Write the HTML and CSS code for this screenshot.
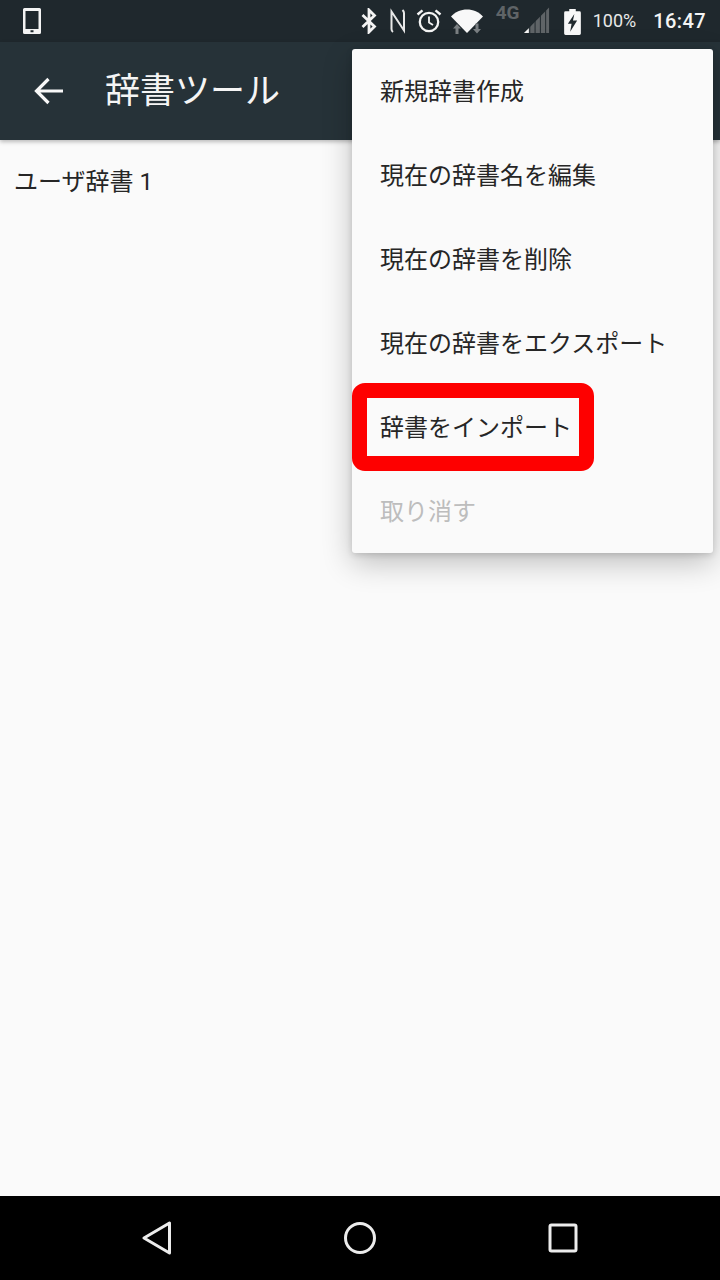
FILE: index.html
```html
<!DOCTYPE html>
<html lang="ja">
<head>
<meta charset="utf-8">
<title>辞書ツール</title>
<link rel="stylesheet" href="styles.css">
</head>
<body>
<div class="screen">
  <header class="status">
    <svg class="st-phone" width="20" height="28" viewBox="0 0 20 28"><path fill="#f4f4f4" fill-rule="evenodd" d="M2.500 1h15A1.500 1.500 0 0 1 19 2.500v23a1.500 1.500 0 0 1-1.500 1.500h-15A1.500 1.500 0 0 1 1 25.500v-23A1.500 1.500 0 0 1 2.500 1zM3.500 4v18h13V4zM8.500 23.200v2h3v-2z"/></svg>
    <div class="st-right">
      <svg class="st-bt" width="16" height="26" viewBox="0 0 16 26"><path fill="none" stroke="#f4f4f4" stroke-width="2.800" d="M1.500 7l12 11.500L8 24V2l5.500 5.500L1.500 19"/></svg>
      <svg class="st-n" width="16" height="26" viewBox="0 0 16 26"><path fill="none" stroke="#e8e8e8" stroke-width="2" d="M3 24c-1.500-1-1.500-2-1.500-3V3.500L14 22.500V5c0-1.500-.5-2-1.500-3"/></svg>
      <svg class="st-alarm" width="26" height="26" viewBox="0 0 26 26"><g fill="none" stroke="#f4f4f4"><circle cx="13" cy="14" r="9.200" stroke-width="2.300"/><path stroke-width="1.800" d="M13 8.500V14.500l4 2.500"/><path stroke-width="2.400" d="M1.500 6.500l5-4.200M24.500 6.500l-5-4.200"/></g></svg>
      <svg class="st-wifi" width="32" height="28" viewBox="0 0 32 28"><path fill="#f8f8f8" d="M0 9.500C4 5 10 2.500 16 2.500s12 2.500 16 7L16 26z"/><path fill="#7a7f82" d="M2 21.500l4-4.500 4 4.500H7.500V27h-3v-5.500zM22 22h2.500v-5.500h3V22H30l-4 4.500z"/></svg>
      <div class="st-net">
        <span class="st-4g">4G</span>
        <svg width="27" height="27" viewBox="0 0 27 27"><path fill="#5f6467" d="M26 0v26.500H0z"/><path fill="#f4f4f4" d="M5 21.500v5H0z"/><path fill="#1f282d" d="M5.500 19h1v8h-1zM11 13h1v14h-1zM16.500 7h1v20h-1zM22 1h1v26h-1z"/></svg>
      </div>
      <svg class="st-batt" width="17" height="26" viewBox="0 0 18 28"><path fill="#f8f8f8" fill-rule="evenodd" d="M5.500 0h7v2.500h4A1.500 1.500 0 0 1 18 4v22.500a1.500 1.500 0 0 1-1.500 1.500h-15A1.500 1.500 0 0 1 0 26.500V4a1.500 1.500 0 0 1 1.500-1.500h4zM11 5.500L4 16h4l-1.500 8.500L14 12.500H9.500z"/></svg>
      <span class="st-pct">100%</span>
      <span class="st-time">16:47</span>
    </div>
  </header>
  <div class="toolbar">
    <svg class="tb-back" width="30" height="28" viewBox="0 0 30 28"><path fill="none" stroke="#f8f8f8" stroke-width="3.200" d="M29 14H3M14.500 2L2.500 14l12 12"/></svg>
    <h1 class="tb-title">辞書ツール</h1>
  </div>
  <main class="content">
    <div class="dict-name">ユーザ辞書 1</div>
  </main>
  <nav class="navbar">
    <svg width="30" height="34" viewBox="0 0 30 34"><path fill="none" stroke="#ececec" stroke-width="3" stroke-linejoin="round" d="M27.500 2v30L2 17z"/></svg>
    <svg width="34" height="34" viewBox="0 0 34 34"><circle cx="17" cy="17" r="14.500" fill="none" stroke="#ececec" stroke-width="3"/></svg>
    <svg width="30" height="30" viewBox="0 0 30 30"><rect x="2" y="2" width="26" height="26" rx="1.500" fill="none" stroke="#ececec" stroke-width="3"/></svg>
  </nav>
  <ul class="menu">
    <li class="menu-item">新規辞書作成</li>
    <li class="menu-item">現在の辞書名を編集</li>
    <li class="menu-item">現在の辞書を削除</li>
    <li class="menu-item">現在の辞書をエクスポート</li>
    <li class="menu-item">辞書をインポート</li>
    <li class="menu-item is-disabled">取り消す</li>
  </ul>
  <div class="highlight"></div>
</div>
</body>
</html>
```
FILE: styles.css
```css
* { box-sizing: border-box; }
html, body { margin: 0; padding: 0; }
body { font-family: "Roboto", "Noto Sans CJK JP", sans-serif; background: #fafafa; }
.screen { position: relative; width: 720px; height: 1280px; display: flex; flex-direction: column; overflow: hidden; }
.status { height: 42px; flex: none; background: #1f282d; display: flex; align-items: center; justify-content: space-between; padding: 0 14px 0 22px; color: #f4f4f4; }
.st-right { display: flex; align-items: center; }
.st-bt { margin-right: 13px; }
.st-n { margin-right: 10px; }
.st-alarm { margin-right: 9px; }
.st-wifi { margin-right: 13px; }
.st-net { display: flex; align-items: flex-start; width: 54px; height: 42px; position: relative; margin-right: 14px; padding: 7px 0 0 28px; }
.st-4g { position: absolute; left: 0; top: 3px; font-size: 19px; line-height: 20px; font-weight: 700; color: #5f6467; }
.st-batt { margin-right: 12px; margin-top: 1px; }
.st-pct { font-size: 18px; line-height: 42px; margin-right: 17px; color: #e8e8e8; }
.st-time { font-size: 20px; line-height: 42px; font-weight: 500; letter-spacing: .4px; }
.toolbar { height: 98px; flex: none; background: #263238; display: flex; align-items: center; padding-left: 34px; box-shadow: 0 2px 4px rgba(0,0,0,.25); position: relative; z-index: 1; }
.tb-title { margin: 1px 0 0 41px; font-size: 35px; line-height: 44px; font-weight: 400; color: #f5f5f5; }
.content { flex: 1; background: #fafafa; padding: 24px 14px 0; }
.dict-name { font-size: 24px; line-height: 36px; color: #262626; }
.navbar { height: 84px; flex: none; background: #000; display: flex; align-items: center; padding: 0 142px; justify-content: space-between; }
.menu { position: absolute; z-index: 2; left: 352px; top: 49px; width: 361px; margin: 0; padding: 0; list-style: none; background: #fafafa; border-radius: 3px; box-shadow: 0 10px 30px rgba(0,0,0,.24), 0 2px 6px rgba(0,0,0,.14); }
.menu-item { height: 84px; padding: 1px 0 0 28px; font-size: 24px; line-height: 84px; color: #262626; white-space: nowrap; }
.is-disabled { color: #bdbdbd; }
.highlight { position: absolute; z-index: 3; left: 352px; top: 383px; width: 242px; height: 88px; border: 15px solid #fe0000; border-radius: 13px; }
```
